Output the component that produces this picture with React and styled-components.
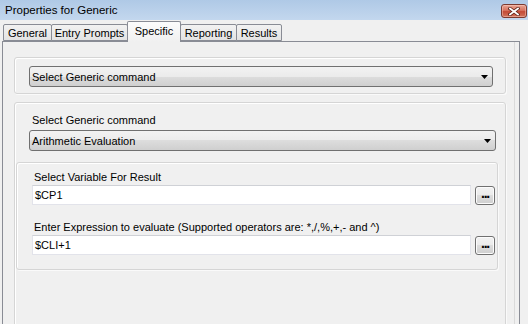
import React from "react";
import styled, { createGlobalStyle } from "styled-components";

const GlobalStyle = createGlobalStyle`
  html, body {
    margin: 0;
    padding: 0;
    background: #f0f0f0;
  }
  body {
    font-family: "Liberation Sans", Arial, sans-serif;
    font-size: 11px;
    color: #000;
  }
`;

const tabs = [
  { name: "General", w: 49 },
  { name: "Entry Prompts", w: 77 },
  { name: "Specific", w: 54 },
  { name: "Reporting", w: 57 },
  { name: "Results", w: 46 },
];

export default function App() {
  return (
    <Window>
      <GlobalStyle />
      <TitleBar>
        <Title>Properties for Generic</Title>
        <CloseButton>
          <svg width="12" height="9" viewBox="0 0 12 9">
            <path d="M2 1.5 L10 7.5 M10 1.5 L2 7.5" stroke="#5a2018" strokeWidth="3.4" strokeLinecap="square" />
            <path d="M2 1.5 L10 7.5 M10 1.5 L2 7.5" stroke="#fff" strokeWidth="1.8" strokeLinecap="square" />
          </svg>
        </CloseButton>
      </TitleBar>

      <TabStrip>
        {tabs.map((t) => (
          <Tab key={t.name} $w={t.w} $active={t.name === "Specific"}>
            {t.name}
          </Tab>
        ))}
      </TabStrip>

      <TabPage>
        <PageBody>
          <GroupBox $pad="8px 12px 6px 14px">
            <Combo>
              <span>Select Generic command</span>
              <Arrow />
            </Combo>
          </GroupBox>

          <GroupBox $pad="11px 0 80px 1px" $mt={8}>
            <Section>
              <Label $ml={3}>Select Generic command</Label>
              <Combo $mt={3}>
                <span>Arithmetic Evaluation</span>
                <Arrow />
              </Combo>
            </Section>

            <InnerGroup>
              <Label $ml={2}>Select Variable For Result</Label>
              <FieldRow>
                <TextBox>$CP1</TextBox>
                <BrowseButton>...</BrowseButton>
              </FieldRow>
              <Label $ml={2} $mt={16}>
                Enter Expression to evaluate (Supported operators are: *,/,%,+,- and ^)
              </Label>
              <FieldRow>
                <TextBox>$CLI+1</TextBox>
                <BrowseButton>...</BrowseButton>
              </FieldRow>
            </InnerGroup>
          </GroupBox>
        </PageBody>
      </TabPage>
    </Window>
  );
}

function Arrow() {
  return (
    <svg width="7" height="4" viewBox="0 0 7 4">
      <polygon points="0,0 7,0 3.5,4" fill="#000" />
    </svg>
  );
}

const Window = styled.div`
  width: 528px;
  height: 324px;
  overflow: hidden;
  background: #f0f0f0;
`;

const TitleBar = styled.div`
  height: 20px;
  display: flex;
  justify-content: space-between;
  align-items: center;
  padding-left: 5px;
  background: linear-gradient(to bottom, #afc9e6, #c3d7ee);
`;

const Title = styled.div`
  font-size: 11.5px;
  color: #000;
  line-height: 14px;
`;

const CloseButton = styled.div`
  align-self: flex-start;
  margin: 4px 1px 0 0;
  width: 26px;
  height: 14px;
  box-sizing: border-box;
  border: 1px solid #7c3a30;
  border-radius: 3px;
  background: linear-gradient(
    to bottom,
    #e8a695 0%,
    #d7735f 45%,
    #c44b36 55%,
    #d0745c 100%
  );
  box-shadow: inset 0 0 0 1px rgba(255, 210, 200, 0.45);
  display: flex;
  align-items: center;
  justify-content: center;
`;

const TabStrip = styled.div`
  height: 21px;
  display: flex;
  align-items: flex-end;
  padding-left: 3px;
  position: relative;
  z-index: 1;
`;

const Tab = styled.div`
  width: ${(p) => p.$w}px;
  height: ${(p) => (p.$active ? 21 : 17)}px;
  margin-right: -1px;
  margin-bottom: ${(p) => (p.$active ? -1 : 0)}px;
  box-sizing: border-box;
  border: 1px solid #898c95;
  border-bottom: ${(p) => (p.$active ? "none" : "1px solid #898c95")};
  border-radius: 2px 2px 0 0;
  background: ${(p) =>
    p.$active
      ? "linear-gradient(to bottom, #fcfcfc, #f0f0f0)"
      : "linear-gradient(to bottom, #f2f2f2, #e3e3e3)"};
  display: flex;
  align-items: center;
  justify-content: center;
  padding-bottom: ${(p) => (p.$active ? 3 : 0)}px;
  font-size: 11px;
  white-space: nowrap;
  position: relative;
  z-index: ${(p) => (p.$active ? 2 : 0)};
`;

const TabPage = styled.div`
  margin-left: 2px;
  width: 518px;
  height: 300px;
  box-sizing: border-box;
  border: 1px solid #898c95;
  border-bottom: none;
  background: #f0f0f0;
`;

const PageBody = styled.div`
  width: 512px;
  height: 100%;
  box-sizing: border-box;
  padding: 15px 8px 0 11px;
  border-right: 1px solid #dadada;
`;

const GroupBox = styled.div`
  margin-top: ${(p) => p.$mt || 0}px;
  padding: ${(p) => p.$pad};
  border: 1px solid #d5d5d5;
  border-radius: 3px;
  box-shadow: inset 1px 1px 0 #fff, 1px 1px 0 #fafafa;
  background: #f0f0f0;
`;

const Section = styled.div`
  padding: 0 9px 0 13px;
`;

const Label = styled.div`
  margin-left: ${(p) => p.$ml || 0}px;
  margin-top: ${(p) => p.$mt || 0}px;
  margin-bottom: 1px;
  line-height: 13px;
  white-space: nowrap;
`;

const Combo = styled.div`
  margin-top: ${(p) => p.$mt || 0}px;
  height: 21px;
  box-sizing: border-box;
  border: 1px solid #707070;
  border-radius: 3px;
  padding: 0 4px 0 2px;
  display: flex;
  align-items: center;
  justify-content: space-between;
  background: linear-gradient(
    to bottom,
    #f2f2f2 0%,
    #ebebeb 50%,
    #dddddd 50%,
    #cfcfcf 100%
  );
  white-space: nowrap;
`;

const InnerGroup = styled.div`
  margin: 11px 7px 0 0;
  padding: 8px 2px 14px 15px;
  border: 1px solid #d5d5d5;
  border-radius: 3px;
  box-shadow: inset 1px 1px 0 #fff, 1px 1px 0 #fafafa;
`;

const FieldRow = styled.div`
  display: flex;
  align-items: flex-end;
  gap: 4px;
`;

const TextBox = styled.div`
  flex: 1;
  height: 20px;
  box-sizing: border-box;
  border: 1px solid #e2e3ea;
  border-top-color: #cfd1d6;
  background: #fff;
  padding-left: 2px;
  display: flex;
  align-items: center;
`;

const BrowseButton = styled.div`
  width: 20px;
  height: 19px;
  box-sizing: border-box;
  border: 1px solid #707070;
  border-radius: 3px;
  background: linear-gradient(
    to bottom,
    #f2f2f2 0%,
    #ebebeb 50%,
    #dddddd 50%,
    #cfcfcf 100%
  );
  box-shadow: inset 0 0 0 1px #fcfcfc;
  display: flex;
  align-items: center;
  justify-content: center;
  padding-bottom: 6px;
  font-weight: bold;
  font-size: 14px;
  letter-spacing: -1.2px;
  line-height: 1;
`;
